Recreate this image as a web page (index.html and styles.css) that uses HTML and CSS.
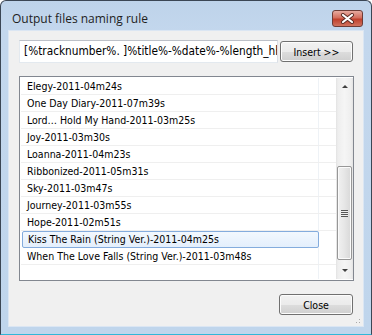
FILE: index.html
```html
<html>

<head>
   <title>Output files naming rule</title>
   <link rel="stylesheet" href="styles.css">
</head>

<body>
<div class="window">
   <div class="titlebar">
      <span class="caption">Output files naming rule</span>
      <div class="close-x">
         <svg width="15" height="11" viewBox="0 0 15 11">
            <path d="M3 2 L12 9 M12 2 L3 9" stroke="#5a2a22" stroke-width="4" stroke-linecap="round"/>
            <path d="M3 2 L12 9 M12 2 L3 9" stroke="#fff" stroke-width="2.2" stroke-linecap="round"/>
         </svg>
      </div>
   </div>

   <div class="client">
      <div class="rule-row">
         <div class="rule-input"><span class="rule-text">[%tracknumber%. ]%title%-%date%-%length_hh%m%length_mm%</span></div>
         <div class="btn btn-insert">Insert &gt;&gt;</div>
      </div>

      <div class="listbox">
         <div class="rows">
            <div class="row">Elegy-2011-04m24s</div>
            <div class="row">One Day Diary-2011-07m39s</div>
            <div class="row">Lord… Hold My Hand-2011-03m25s</div>
            <div class="row">Joy-2011-03m30s</div>
            <div class="row">Loanna-2011-04m23s</div>
            <div class="row">Ribbonized-2011-05m31s</div>
            <div class="row">Sky-2011-03m47s</div>
            <div class="row">Journey-2011-03m55s</div>
            <div class="row">Hope-2011-02m51s</div>
            <div class="row selected">Kiss The Rain (String Ver.)-2011-04m25s</div>
            <div class="row">When The Love Falls (String Ver.)-2011-03m48s</div>
         </div>
         <div class="scrollbar">
            <div class="arrow up"></div>
            <div class="track">
               <div class="thumb"><span class="grip"></span></div>
            </div>
            <div class="arrow down"></div>
         </div>
      </div>

      <div class="footer">
         <div class="btn btn-close">Close</div>
      </div>
      <div class="sizegrip"></div>
   </div>
</div>
</body>

</html>
```

FILE: styles.css
```css
body {
   margin: 0;
   background: #fff;
   font-family: "DejaVu Sans Condensed", "DejaVu Sans", sans-serif;
   font-size: 10.5px;
   color: #000;
}

.window {
   width: 372px;
   height: 335px;
   box-sizing: border-box;
   border: 1px solid #3b4654;
   border-bottom-color: #2fb7d8;
   border-radius: 6px 6px 0 0;
   background: linear-gradient(to bottom, #bed3ea 0, #c3d7ed 30px, #bfd5ec 100%);
   padding: 0 7px 7px 7px;
   display: flex;
   flex-direction: column;
}

.titlebar {
   height: 29px;
   display: flex;
   align-items: flex-start;
   justify-content: space-between;
}

.caption {
   font-family: "Open Sans", "Liberation Sans", sans-serif;
   font-size: 12px;
   color: #1e1e1e;
   padding-left: 4px;
   padding-top: 9px;
}

.close-x {
   width: 29px;
   height: 15px;
   margin-top: 9px;
   margin-right: 1px;
   border: 1px solid #6e3c36;
   border-radius: 3px;
   background: linear-gradient(to bottom, #e7aba0 0, #d46e5d 45%, #c0402c 55%, #d0735f 100%);
   display: flex;
   align-items: center;
   justify-content: center;
}

.client {
   flex: 1;
   position: relative;
   background: #f0f0f0;
   border: 1px solid #dbe6f3;
   padding: 9px 10px 0 10px;
   display: flex;
   flex-direction: column;
}

.rule-row {
   display: flex;
   align-items: center;
   gap: 2px;
}

.rule-input {
   width: 259px;
   height: 23px;
   box-sizing: border-box;
   border: 1px solid #abadb3;
   border-top-color: #bcc0c8;
   border-left-color: #e3e9ef;
   border-right-color: #dbdfe6;
   border-bottom-color: #e3e9ef;
   background: #fff;
   padding: 0 0 0 4px;
   line-height: 21px;
   white-space: nowrap;
   overflow: hidden;
   font-size: 11.75px;
}

.btn {
   box-sizing: border-box;
   border: 1px solid #707070;
   border-radius: 3px;
   background: linear-gradient(to bottom, #f2f2f2 0, #ebebeb 50%, #dddddd 51%, #cfcfcf 100%);
   box-shadow: inset 0 0 0 1px #fcfcfc;
   display: flex;
   align-items: center;
   justify-content: center;
}

.btn-insert {
   width: 73px;
   height: 21px;
}

.listbox {
   margin-top: 13px;
   width: 335px;
   height: 205px;
   box-sizing: border-box;
   border: 1px solid #828790;
   background: #fff;
   display: flex;
   padding: 1px 0 1px 1px;
}

.rows {
   flex: 1;
   background: linear-gradient(to right, transparent 297px, #eef2f6 297px, #eef2f6 298px, transparent 298px);
}

.row {
   height: 17px;
   box-sizing: border-box;
   border-bottom: 1px solid #efefef;
   padding-left: 6px;
   line-height: 16px;
   white-space: nowrap;
}

.row.selected {
   width: 297px;
   margin-left: 1px;
   padding-left: 5px;
   border: 1px solid #84acdd;
   border-radius: 2px;
   background: linear-gradient(to bottom, #f2f8fe, #e4effc);
   line-height: 15px;
}

.scrollbar {
   width: 17px;
   display: flex;
   flex-direction: column;
   background: linear-gradient(to right, #e3e3e3 0, #eeeeee 2px, #f5f5f5 50%, #eeeeee 15px, #e3e3e3 17px);
}

.arrow {
   height: 17px;
   display: flex;
   align-items: center;
   justify-content: center;
}

.arrow::before {
   content: "";
   border-left: 3px solid transparent;
   border-right: 3px solid transparent;
}

.arrow.up::before {
   border-bottom: 3px solid #404040;
}

.arrow.down::before {
   border-top: 3px solid #404040;
}

.track {
   flex: 1;
   display: flex;
   flex-direction: column;
   justify-content: flex-end;
   padding-bottom: 2px;
}

.thumb {
   height: 94px;
   margin: 0 1px;
   box-sizing: border-box;
   border: 1px solid #979797;
   border-radius: 2px;
   background: linear-gradient(to right, #f1f1f1 0, #e6e6e6 50%, #d8d8d8 100%);
   box-shadow: inset 0 0 0 1px #fbfbfb;
   display: flex;
   align-items: center;
   justify-content: center;
}

.grip {
   width: 7px;
   height: 7px;
   background: repeating-linear-gradient(to bottom, #555 0, #555 1px, #eee 1px, #eee 2px);
}

.footer {
   display: flex;
   justify-content: flex-end;
   margin-top: 13px;
}

.btn-close {
   width: 74px;
   height: 21px;
}

.sizegrip {
   position: absolute;
   right: 1px;
   bottom: 1px;
   width: 10px;
   height: 10px;
   background: radial-gradient(circle, #a9a9a9 0.7px, transparent 1px) 0 0 / 3px 3px;
   clip-path: polygon(100% 0, 100% 100%, 0 100%);
}
```
